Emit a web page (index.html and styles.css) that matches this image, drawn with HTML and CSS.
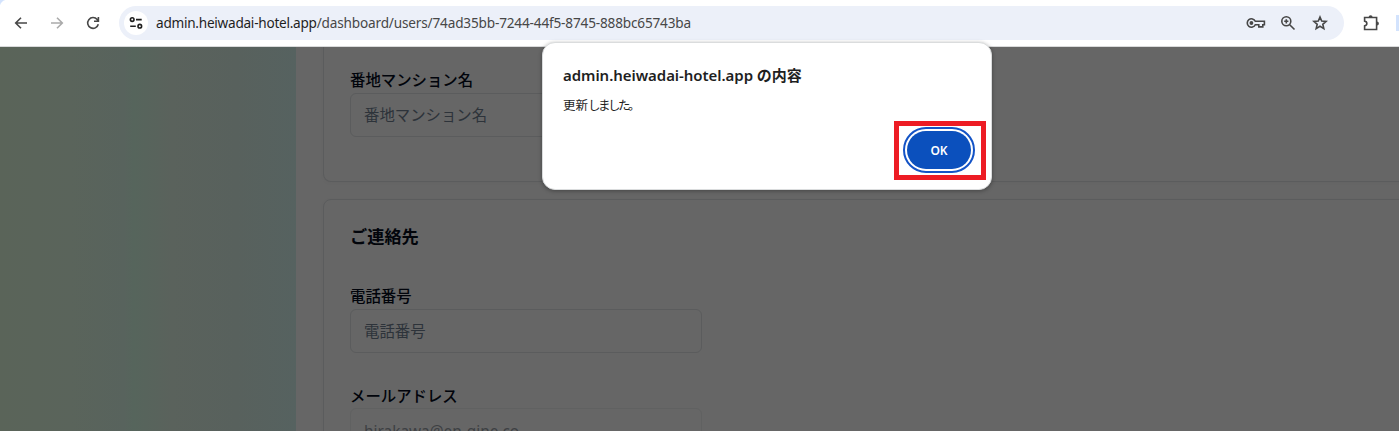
FILE: index.html
```html
<!DOCTYPE html>
<html lang="ja">
<head>
<meta charset="utf-8">
<title>admin.heiwadai-hotel.app</title>
<link rel="stylesheet" href="styles.css">
</head>
<body>
<header class="toolbar">
  <nav class="nav">
    <svg class="icon" viewBox="0 0 16 16"><path d="M14 8H3M8 2.7 2.7 8 8 13.3"/></svg>
    <svg class="icon icon-off" viewBox="0 0 16 16"><path d="M2 8h11M8 2.7 13.3 8 8 13.3"/></svg>
    <svg class="icon" viewBox="0 0 16 16"><path d="M13.3 9.3A5.4 5.4 0 1 1 12.2 4.5L13.3 6M13.4 2v4.3H9"/></svg>
  </nav>
  <div class="address">
    <span class="site"><svg class="icon icon-dark" viewBox="0 0 16 16"><circle cx="4.2" cy="4.6" r="1.8"/><path d="M8 4.6h5.7M2.2 11.2h5.6"/><circle cx="11.8" cy="11.2" r="1.8"/></svg></span>
    <span class="url"><span class="host">admin.heiwadai-hotel.app</span>/dashboard/users/74ad35bb-7244-44f5-8745-888bc65743ba</span>
    <span class="actions">
      <svg class="icon icon-key" viewBox="0 0 20 16"><path d="M9.3 6.3A4.2 4.2 0 1 0 9.3 9.7H12.8v2.2h4V9.7h1.6V6.3z"/><circle class="fill" cx="5.4" cy="8" r="1.9"/></svg>
      <svg class="icon" viewBox="0 0 16 16"><circle cx="6.3" cy="6.3" r="4.5"/><path d="m9.7 9.7 4.8 4.8M6.3 4.2v4.2M4.2 6.3h4.2"/></svg>
      <svg class="icon" viewBox="0 0 16 16"><path d="m8 2 1.7 4 4.4.4-3.3 2.9 1 4.3L8 11.3l-3.8 2.3 1-4.3-3.3-2.9L6.3 6z"/></svg>
    </span>
  </div>
  <svg class="icon icon-puzzle" viewBox="0 0 18 18"><path d="M2.6 3.5h12v12h-12v-3.6c3-.6 3-4.2 0-4.8z"/><path class="fill" d="M6.6 3.2a2 2 0 0 1 4 0zM14.9 7.5a2 2 0 0 1 0 4z"/></svg>
  <span class="divider"></span>
</header>
<main class="page">
  <aside class="sidebar"></aside>
  <div class="content">
    <section class="card card-address">
      <label class="field"><span class="label">番地マンション名</span><span class="input">番地マンション名</span></label>
    </section>
    <section class="card card-contact">
      <h2 class="heading">ご連絡先</h2>
      <label class="field"><span class="label">電話番号</span><span class="input">電話番号</span></label>
      <label class="field"><span class="label">メールアドレス</span><span class="input input-off">hirakawa@en-gine.co</span></label>
    </section>
  </div>
</main>
<div class="dialog">
  <h1 class="dialog-title">admin.heiwadai-hotel.app <span class="title-ja">の内容</span></h1>
  <p class="message">更新<span class="kana">しました。</span></p>
  <div class="highlight"><button class="ok">OK</button></div>
</div>
</body>
</html>
```
FILE: styles.css
```css
* { box-sizing: border-box; }
body {
  margin: 0;
  width: 1399px;
  height: 431px;
  overflow: hidden;
  display: flex;
  flex-direction: column;
  background: #666;
  font-family: "Noto Sans", "Noto Sans CJK JP", sans-serif;
}
.toolbar {
  flex: none;
  height: 47px;
  display: flex;
  align-items: center;
  border-bottom: 1px solid #d9dadb;
  background: radial-gradient(circle at 8px 8px, #fff 8px, #d3e3fd 9px) 0 0 / 8px 8px no-repeat, #fff;
}
.nav { width: 119px; padding-left: 13px; display: flex; gap: 20px; }
.icon {
  flex: none;
  width: 16px;
  height: 16px;
  fill: none;
  stroke: #474747;
  stroke-width: 1.6;
}
.icon .fill { fill: #474747; stroke: none; }
.icon-off { stroke: #aaa; }
.icon-dark { stroke: #1f1f1f; }
.address {
  width: 1225px;
  height: 34px;
  padding: 0 16px 0 5px;
  display: flex;
  align-items: center;
  border-radius: 17px;
  background: #ecf0f9;
}
.site {
  width: 24px;
  height: 24px;
  display: grid;
  place-items: center;
  border-radius: 50%;
  background: #fff;
}
.url { margin-left: 8px; font-size: 13.6px; line-height: 20px; white-space: nowrap; color: #474747; letter-spacing: -.17px; }
.host { color: #1f1f1f; letter-spacing: -.25px; }
.actions { margin-left: auto; display: flex; gap: 16px; }
.nav .icon, .actions .icon { display: block; }
.icon-key { width: 20px; margin-right: -2px; }
.icon-puzzle { width: 18px; height: 18px; margin-left: 18px; }
.divider { width: 3px; height: 16px; margin-left: 16px; background: #d3e3fd; }
.page { flex: 1; min-height: 0; display: flex; }
.sidebar {
  flex: none;
  width: 296px;
  background: linear-gradient(90deg, #5a6459 0%, #5a645b 24%, #58635d 42%, #56655c 45%, #5a625c 58%, #58615d 80%, #566260 100%);
}
.content { flex: none; width: 1120px; padding-left: 27px; overflow: hidden; }
.card {
  padding: 0 27px 0 26px;
  border: 1px solid #5b5c5d;
  border-radius: 8px;
  box-shadow: 0 1px 2px #6060604d;
}
.card-address { height: 135px; padding-top: 20px; border-top: 0; border-radius: 0 0 8px 8px; }
.card-contact { height: 300px; margin-top: 17px; padding-top: 24px; }
.heading { margin: 0 0 34px; font-size: 17.2px; line-height: 25px; font-weight: 600; color: #02050b; }
.field { display: flex; flex-direction: column; width: 352px; margin-bottom: 29px; }
.label { height: 26px; font-size: 15.4px; line-height: 28px; font-weight: 500; color: #01040b; }
.input {
  height: 44px;
  padding-left: 13px;
  border: 1px solid #5b5c5d;
  border-radius: 6px;
  font-size: 15.4px;
  line-height: 44px;
  color: #2d333a;
}
.card-contact .field:last-child .label { line-height: 30px; }
.input-off { border-color: #606161; color: #3d4043; line-height: 46px; letter-spacing: 0; }
.dialog {
  position: absolute;
  left: 542px;
  top: 42px;
  width: 450px;
  height: 148px;
  padding: 21px 5px 0 20px;
  display: flex;
  flex-direction: column;
  border: 1px solid #dadcdd;
  border-radius: 13px;
  background: #fff;
  box-shadow: 0 1px 4px #0005;
  color: #1f1f1f;
}
.dialog-title { margin: 0; font-size: 15px; line-height: 22px; font-weight: 600; letter-spacing: -.05px; white-space: nowrap; }
.title-ja { letter-spacing: 0; }
.message { margin: 11px 0 0; font-size: 12.5px; line-height: 18px; }
.kana { letter-spacing: -2.5px; }
.highlight {
  align-self: flex-end;
  width: 92px;
  height: 59px;
  margin-top: 6px;
  padding: 5px 0 0 8px;
  border: 5px solid #ed1c24;
}
.ok {
  display: block;
  width: 64px;
  height: 38px;
  padding: 2px 0 0;
  border: 0;
  border-radius: 19px;
  outline: 2px solid #1353c6;
  outline-offset: 2px;
  background: #0b50bd;
  color: #fff;
  font: 600 12px/18px "Noto Sans", sans-serif;
}
```
